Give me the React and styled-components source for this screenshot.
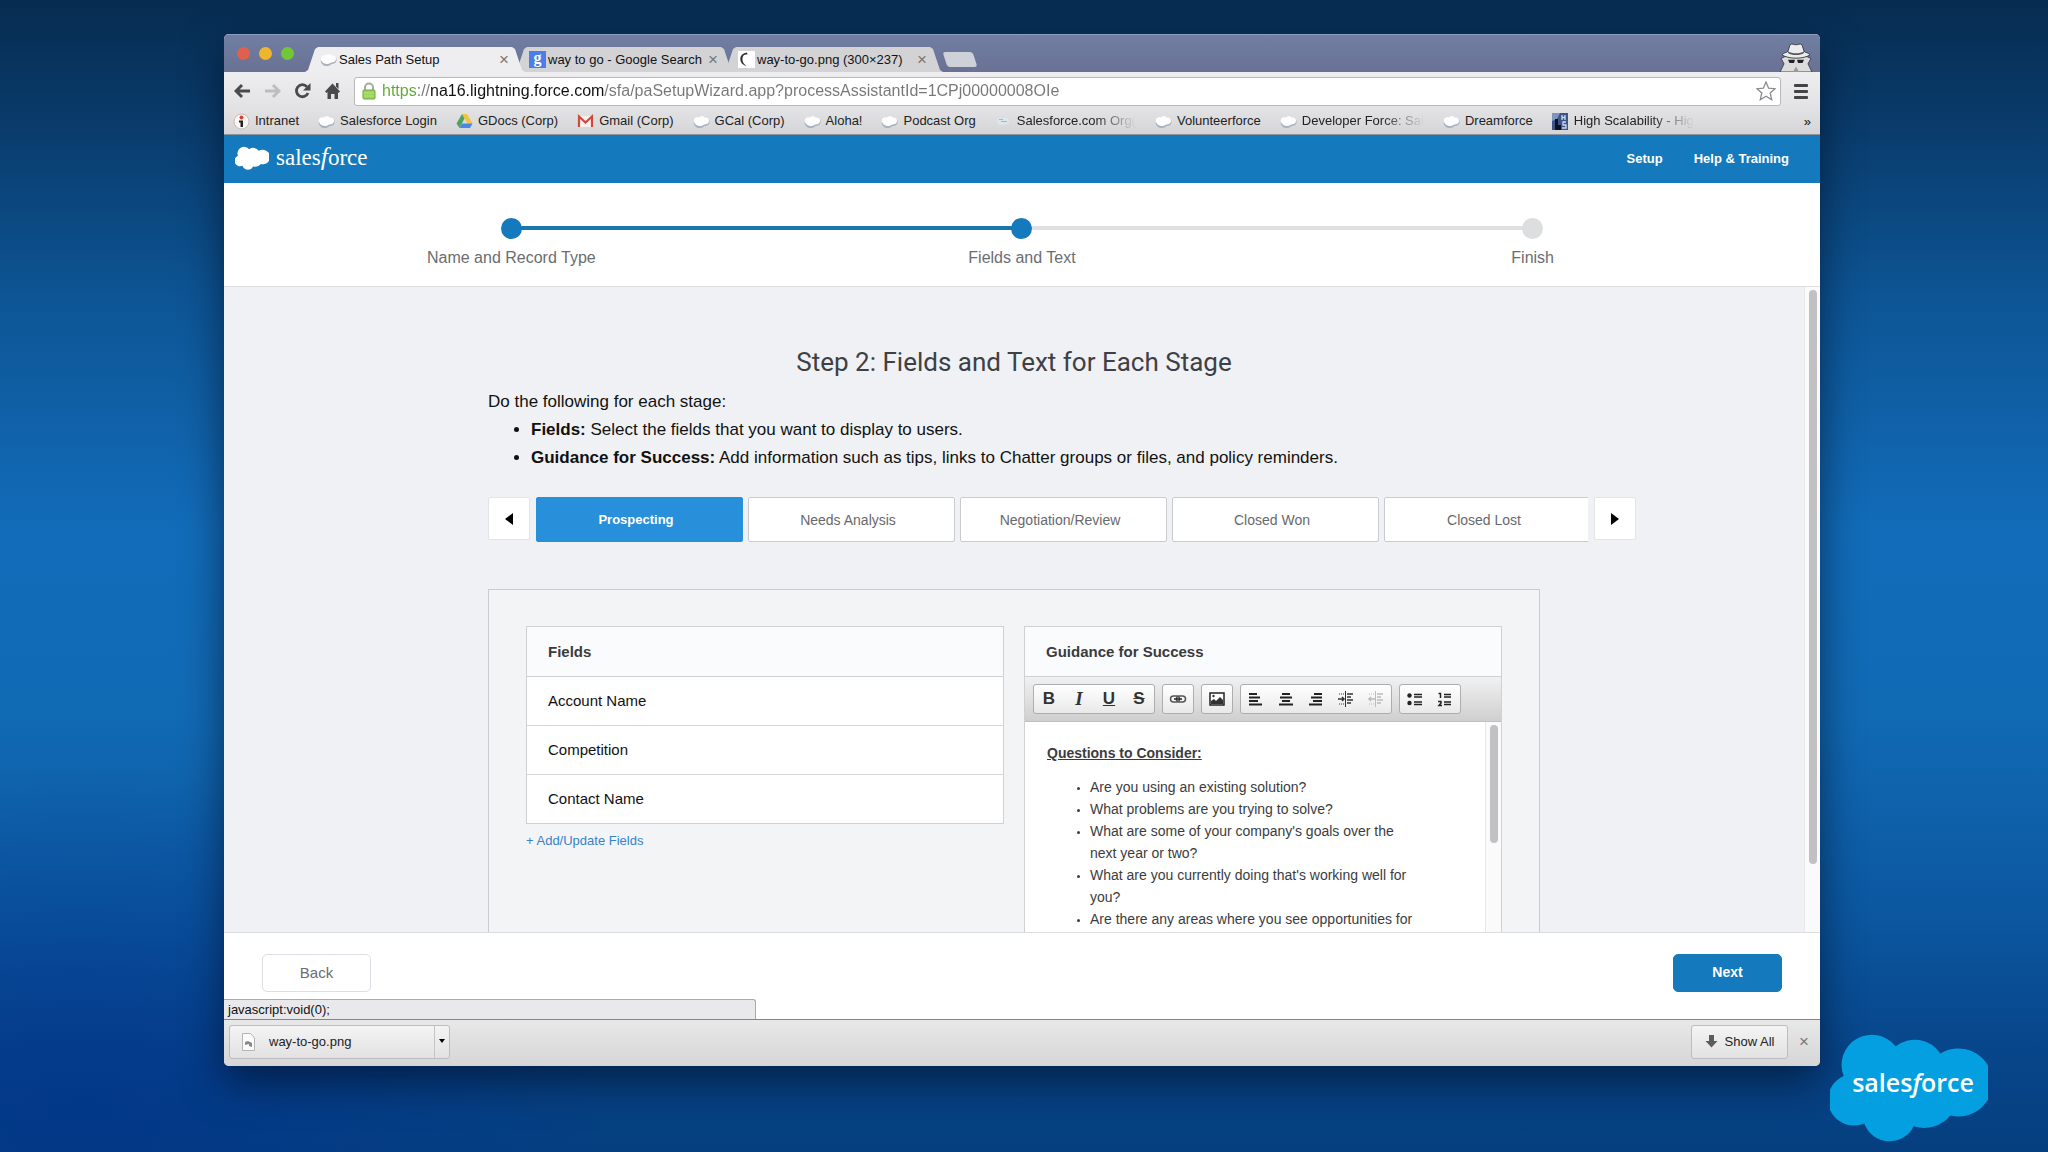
import React from 'react'
import styled, { createGlobalStyle, css } from "styled-components";

const GlobalStyle = createGlobalStyle`
  * {
    box-sizing: border-box;
  }
  body {
    margin: 0;
    font-family: "Liberation Sans", Arial, sans-serif;
    color: #111;
  }
  button, input {
    font-family: inherit;
  }
  a {
    text-decoration: none;
  }
  ul, ol {
    margin: 0;
    padding: 0;
  }
`;

const tabs = [
  { title: 'Sales Path Setup', icon: 'cloud', active: true },
  { title: 'way to go - Google Search', icon: 'google' },
  { title: 'way-to-go.png (300×237)', icon: 'spinner' },
];

const bookmarks = [
  { title: 'Intranet', icon: 'info' },
  { title: 'Salesforce Login', icon: 'cloud' },
  { title: 'GDocs (Corp)', icon: 'drive' },
  { title: 'Gmail (Corp)', icon: 'gmail' },
  { title: 'GCal (Corp)', icon: 'cloud' },
  { title: 'Aloha!', icon: 'cloud' },
  { title: 'Podcast Org', icon: 'cloud' },
  { title: 'Salesforce.com Org(', icon: 'mist', cut: true },
  { title: 'Volunteerforce', icon: 'cloud' },
  { title: 'Developer Force: Sal', icon: 'cloud', cut: true },
  { title: 'Dreamforce', icon: 'cloud' },
  { title: 'High Scalability - Hig', icon: 'hs', cut: true },
];

const steps = [
  { label: 'Name and Record Type', done: true, line: 'blue' },
  { label: 'Fields and Text', done: true, line: 'grey' },
  { label: 'Finish', done: false },
];

const stages = ['Prospecting', 'Needs Analysis', 'Negotiation/Review', 'Closed Won', 'Closed Lost'];

const fields = ['Account Name', 'Competition', 'Contact Name'];

const questions = [
  'Are you using an existing solution?',
  'What problems are you trying to solve?',
  "What are some of your company's goals over the next year or two?",
  "What are you currently doing that's working well for you?",
  'Are there any areas where you see opportunities for',
];

/* icons */

const CLOUD = "M612 468A91 91 0 0 1 768 378A92 92 0 0 1 902 400A103 103 0 1 1 932 588A100 100 0 0 1 822 620A80 80 0 0 1 674 612A76 76 0 0 1 612 468Z";

const CloudShape = ({ width, height, fill }) => (
  <svg width={width} height={height} viewBox="571 332 474 339" preserveAspectRatio="none" aria-hidden="true">
    <path d={CLOUD} fill={fill} />
  </svg>
);

const Favicon = ({ name }) => {
  if (name === 'google') return <GoogleTile aria-hidden="true">g</GoogleTile>;
  return (
    <svg width="17" height="17" viewBox="0 0 17 17" aria-hidden="true">
      {name === 'cloud' && (
        <g>
          <path d="M1 11.500C0 8 3 5 6 5.500C9 3.500 11 4 12 5.500C15 5 17 7 16.500 9C16.500 12 14 13 11.500 13C9 16 3 16 1 11.500Z" fill="#a9b3c0" />
          <path d="M1 9C0 6 2.500 3.500 5.500 4.500C8 2.500 11 3 11.500 4.500C14.500 4 16.500 6 16 8C16 10.500 13.500 11.500 11 11.500C8.500 14 2.500 13.500 1 9Z" fill="#fdfdfe" />
        </g>
      )}
      {name === 'mist' && (
        <g>
          <path d="M2 9C1 6 4 4 7 5C10 3.500 14 5 14 8C14 11 11 12 8 11.500C5 12.500 3 12 2 9Z" fill="#dde6ec" />
          <path d="M6 8.500H12M4 6.500H8" stroke="#9fb9c9" />
        </g>
      )}
      {name === 'spinner' && (
        <g>
          <rect width="17" height="17" fill="#fff" />
          <path d="M9 1.500C3 2 1 7 3 11C4 13 6 14.500 8.500 15C5.500 13 4 10 4.500 7C5 4 7 3 9.500 3.500Z" fill="#333" />
        </g>
      )}
      {name === 'info' && (
        <g>
          <circle cx="8.500" cy="8.500" r="7.500" fill="#fbf6f5" stroke="#c9b8b8" />
          <circle cx="8.500" cy="4.500" r="2" fill="#d8402f" />
          <path d="M6 7.500H10V14H7.500V9.500H6Z" fill="#222" />
        </g>
      )}
      {name === 'drive' && (
        <g>
          <path d="M6 1H11L16.500 10.500H11.500Z" fill="#f3c33a" />
          <path d="M6 1L8.500 5.500L3.500 15L0.500 10.500Z" fill="#4aa564" />
          <path d="M6 10.500H16.500L14 15H3.500Z" fill="#4b86e4" />
        </g>
      )}
      {name === 'gmail' && (
        <g>
          <rect x="1" y="3" width="15" height="11" fill="#f7f1f0" />
          <path d="M2 14V3.500L8.500 9.500L15 3.500V14" fill="none" stroke="#cf4a3e" strokeWidth="2.200" />
        </g>
      )}
      {name === 'hs' && (
        <g>
          <rect width="16" height="17" fill="#3d5488" />
          <path d="M0 0H8L5 6L0 8Z" fill="#7d95bd" />
          <path d="M3 17V6H6V12H9V17Z" fill="#0d1220" />
          <path d="M10 2V7M13 2V7M10 4.500H13M14 9H11V12H14V15H10" fill="none" stroke="#cfdaf0" strokeWidth="1.300" />
        </g>
      )}
    </svg>
  );
};

const BackIcon = ({ color }) => (
  <svg width="17" height="16" viewBox="0 0 17 16" aria-hidden="true">
    <path d="M8 2L2 8L8 14M2.500 8H16" fill="none" stroke={color} strokeWidth="3" />
  </svg>
);

const ForwardIcon = ({ color }) => (
  <svg width="17" height="16" viewBox="0 0 17 16" aria-hidden="true">
    <path d="M9 2L15 8L9 14M14.500 8H1" fill="none" stroke={color} strokeWidth="3" />
  </svg>
);

const ReloadIcon = () => (
  <svg width="17" height="16" viewBox="0 0 17 16" aria-hidden="true">
    <path d="M13 3.800A6 6 0 1 0 14 10" fill="none" stroke="#4a4a4a" strokeWidth="2.800" />
    <path d="M16.500 0V7.500H9Z" fill="#4a4a4a" />
  </svg>
);

const HomeIcon = () => (
  <svg width="17" height="16" viewBox="0 0 17 16" aria-hidden="true">
    <path d="M8.500 0.500L16 8.500L14.500 10L14 9V16H10.500V11H7V16H3.500V9L2.500 10L1 8.500Z" fill="#4a4a4a" />
    <path d="M12 0H14.500V6L12 3.500Z" fill="#4a4a4a" />
  </svg>
);

const LockIcon = () => (
  <svg width="14" height="18" viewBox="0 0 14 18" aria-hidden="true">
    <path d="M3 9V5.500A4 4 0 0 1 11 5.500V9" fill="none" stroke="#a5aaa2" strokeWidth="2" />
    <rect x="1" y="8" width="12" height="9" rx="1" fill="#9bd35c" stroke="#6fa83a" />
    <path d="M2 11H12M2 14H12" stroke="#b5e284" />
  </svg>
);

const StarIcon = () => (
  <svg width="20" height="20" viewBox="0 0 20 20" aria-hidden="true">
    <path d="M10 1L12.600 7.200L19 7.700L14.200 12L15.700 18.700L10 15.200L4.300 18.700L5.800 12L1 7.700L7.400 7.200Z" fill="#fff" stroke="#8a8a8a" strokeWidth="1.300" />
  </svg>
);

const SpyIcon = () => (
  <svg width="34" height="29" viewBox="0 0 34 32" preserveAspectRatio="none" aria-hidden="true">
    <path d="M2 17L8 14L26 14L32 17L29 23L33 32H1L5 23Z" fill="#dcdcdc" stroke="#3c4152" />
    <path d="M3 13C9 18 25 18 31 13C29 10 26 11 25 9L23 2C21 0 19 2 17 2C15 2 13 0 11 2L9 9C8 11 5 10 3 13Z" fill="#ececec" stroke="#3c4152" />
    <path d="M9 9C13 12 21 12 25 9L25 11C21 14 13 14 9 11Z" fill="#555" />
    <path d="M9 18.500H16L15 22H10.500ZM18 18.500H25L23.500 22H19Z" fill="#222" />
    <path d="M14 32L17 26L20 32Z" fill="#999" />
  </svg>
);

const ToolIcon = ({ name }) => (
  <svg width="18" height="16" viewBox="0 0 18 16" aria-hidden="true" fill="none" stroke="#222">
    {name === 'link' && (
      <g strokeWidth="1.500" stroke="#555">
        <rect x="1.500" y="5" width="9" height="6" rx="3" />
        <rect x="7.500" y="5" width="9" height="6" rx="3" />
        <path d="M5 8H13" stroke="#222" />
      </g>
    )}
    {name === 'image' && (
      <g>
        <rect x="2" y="2" width="14" height="12" fill="#fff" strokeWidth="1.500" />
        <path d="M3 13V10L6 8L8 10L12 6L15 9V13Z" fill="#333" stroke="none" />
        <circle cx="5.500" cy="5" r="1.200" fill="#333" stroke="none" />
      </g>
    )}
    {name === 'left' && <path d="M2 3H10M2 6.500H13M2 10H11M2 13.500H15" strokeWidth="2.200" />}
    {name === 'center' && <path d="M5 3H13M3 6.500H15M5 10H13M2 13.500H16" strokeWidth="2.200" />}
    {name === 'right' && <path d="M7 3H15M4 6.500H15M6 10H15M2 13.500H15" strokeWidth="2.200" />}
    {(name === 'indent' || name === 'outdent') && (
      <g stroke={name === 'indent' ? '#333' : '#bbb'}>
        <path d="M8.500 0V16" />
        <path d="M10 3H16M10 6H14M10 9H16M10 12H14" strokeWidth="1.500" />
        <path d="M2 3H8M2 13H8" strokeDasharray="1 1" />
        <path d={name === 'indent' ? "M1 8H7M5 6L7 8L5 10" : "M8 8H2M4 6L2 8L4 10"} strokeWidth="1.500" />
      </g>
    )}
    {name === 'bullets' && (
      <g>
        <circle cx="3.500" cy="4.500" r="2.200" fill="#222" stroke="none" />
        <circle cx="3.500" cy="12" r="2.200" fill="#222" stroke="none" />
        <path d="M8 3.500H16M8 6H16M8 11H16M8 13.500H16" strokeWidth="1.500" />
      </g>
    )}
    {name === 'numbers' && (
      <g>
        <path d="M2.500 2.500H4.500V7M2 10.500H5V12L3 14.500H6" strokeWidth="1.500" />
        <path d="M8 3.500H15M8 6H15M8 11H15M8 13.500H15" strokeWidth="1.500" />
      </g>
    )}
  </svg>
);

const groups = [
  ['bold', 'italic', 'underline', 'strike'],
  ['link'],
  ['image'],
  ['left', 'center', 'right', 'indent', 'outdent'],
  ['bullets', 'numbers'],
];

const letters = { bold: 'B', italic: 'I', underline: 'U', strike: 'S' };

const Chrome = () => (
  <header>
    <TabStrip>
      <Lights>
        <Light $color="#e0604f" />
        <Light $color="#edb62f" />
        <Light $color="#74c53a" />
      </Lights>
      <Tabs>
        {tabs.map((t) => (
          <Tab key={t.title} $active={t.active}>
            <Favicon name={t.icon} />
            <TabTitle>{t.title}</TabTitle>
            <CloseButton aria-label="Close tab">×</CloseButton>
          </Tab>
        ))}
        <NewTab aria-label="New tab" />
      </Tabs>
      <SpyIcon />
    </TabStrip>
    <Toolbar>
      <IconButton aria-label="Back"><BackIcon color="#4a4a4a" /></IconButton>
      <IconButton aria-label="Forward"><ForwardIcon color="#bdbdbd" /></IconButton>
      <IconButton aria-label="Reload"><ReloadIcon /></IconButton>
      <IconButton aria-label="Home"><HomeIcon /></IconButton>
      <AddressBox>
        <LockIcon />
        <AddressInput
          aria-label="Address"
          defaultValue="https://na16.lightning.force.com/sfa/paSetupWizard.app?processAssistantId=1CPj00000008OIe"
        />
        <StarIcon />
      </AddressBox>
      <MenuButton aria-label="Menu"><i /><i /><i /></MenuButton>
    </Toolbar>
    <Bookmarks>
      {bookmarks.map((b) => (
        <Bookmark key={b.title} href="#" $cut={b.cut}>
          <Favicon name={b.icon} />
          <span>{b.title}</span>
        </Bookmark>
      ))}
      <More>»</More>
    </Bookmarks>
  </header>
);

const Editor = () => (
  <Card>
    <CardTitle>Guidance for Success</CardTitle>
    <EditorBar>
      {groups.map((g) => (
        <Group key={g[0]}>
          {g.map((name) => (
            <Tool key={name} aria-label={name} $kind={name}>
              {letters[name] || <ToolIcon name={name} />}
            </Tool>
          ))}
        </Group>
      ))}
    </EditorBar>
    <EditorBody>
      <EditorText>
        <h4>Questions to Consider:</h4>
        <ul>
          {questions.map((q) => <li key={q}>{q}</li>)}
        </ul>
      </EditorText>
      <Track>
        <Thumb $height="118px" />
      </Track>
    </EditorBody>
  </Card>
);

const App = () => (
  <Desktop>
    <GlobalStyle />
    <Window>
      <Chrome />
      <AppBar>
        <Brand href="#">
          <CloudShape width={34} height={24} fill="#fff" />
          <span>sales<em>f</em>orce</span>
        </Brand>
        <AppLink href="#">Setup</AppLink>
        <AppLink href="#">Help &amp; Training</AppLink>
      </AppBar>
      <Steps>
        {steps.map((s) => (
          <Step key={s.label} $done={s.done} $line={s.line}>{s.label}</Step>
        ))}
      </Steps>
      <Main>
        <Scroller>
          <Content>
            <Title>Step 2: Fields and Text for Each Stage</Title>
            <Intro>
              <p>Do the following for each stage:</p>
              <ul>
                <li><b>Fields:</b> Select the fields that you want to display to users.</li>
                <li><b>Guidance for Success:</b> Add information such as tips, links to Chatter groups or files, and policy reminders.</li>
              </ul>
            </Intro>
            <StageRow>
              <Arrow aria-label="Previous stages">
                <svg width="8" height="12" viewBox="0 0 8 12"><path d="M8 0V12L0 6Z" /></svg>
              </Arrow>
              <StageList>
                {stages.map((s, i) => <Stage key={s} $active={i === 0}>{s}</Stage>)}
              </StageList>
              <Arrow aria-label="Next stages">
                <svg width="8" height="12" viewBox="0 0 8 12"><path d="M0 0V12L8 6Z" /></svg>
              </Arrow>
            </StageRow>
            <Panel>
              <div>
                <Card>
                  <CardTitle>Fields</CardTitle>
                  {fields.map((f) => <FieldRow key={f}>{f}</FieldRow>)}
                </Card>
                <AddLink href="#">+ Add/Update Fields</AddLink>
              </div>
              <Editor />
            </Panel>
          </Content>
        </Scroller>
        <Track>
          <Thumb $height="574px" />
        </Track>
      </Main>
      <Footer>
        <FooterButton>Back</FooterButton>
        <FooterButton $primary>Next</FooterButton>
        <StatusBubble>javascript:void(0);</StatusBubble>
      </Footer>
      <Shelf>
        <Download>
          <DownloadButton>
            <svg width="13" height="18" viewBox="0 0 13 18" aria-hidden="true">
              <path d="M0.500 0.500H8.500L12.500 5V17.500H0.500Z" fill="#fafafa" stroke="#b5b5b5" />
              <path d="M3 9L6 8L10 10V14L7 13V11L3 12Z" fill="#888" />
            </svg>
            way-to-go.png
          </DownloadButton>
          <DownloadMenu aria-label="Download options">
            <svg width="6" height="4" viewBox="0 0 6 4"><path d="M0 0H6L3 4Z" /></svg>
          </DownloadMenu>
        </Download>
        <ShowAll>
          <svg width="13" height="13" viewBox="0 0 13 13" aria-hidden="true">
            <path d="M4 0H9V6H12.500L6.500 12.500L0.500 6H4Z" fill="#5c5c5c" />
          </svg>
          Show All
        </ShowAll>
        <CloseButton aria-label="Close downloads">×</CloseButton>
      </Shelf>
    </Window>
    <Watermark>
      <CloudShape width={158} height={112} fill="#049fe0" />
      <span>sales<em>f</em>orce</span>
    </Watermark>
  </Desktop>
);

export default App;

const Desktop = styled.div`
  position: relative;
  height: 100vh;
  display: flex;
  padding: 34px 228px 86px 224px;
  overflow: hidden;
  background:
    radial-gradient(ellipse 520px 340px at 4% 96%, rgba(0, 50, 140, .6), rgba(0, 50, 140, 0)),
    linear-gradient(180deg, #072c50 0%, #093a69 10%, #0d5595 26%, #126cb9 46%, #116ab4 62%, #0b569f 80%, #074488 92%, #053f80 100%);
`;

const Window = styled.div`
  flex: 1;
  min-width: 0;
  display: flex;
  flex-direction: column;
  overflow: hidden;
  border-radius: 5px;
  background: #fff;
  box-shadow: 0 16px 40px rgba(0, 10, 30, .6);
`;

const TabStrip = styled.div`
  height: 38px;
  display: flex;
  align-items: flex-end;
  padding: 0 7px 0 13px;
  background: linear-gradient(#6f7fa3, #6a7194);
  border-top: 1px solid #8b9bbb;
`;

const Lights = styled.div`
  display: flex;
  gap: 9px;
  align-self: center;
  width: 68px;
`;

const Light = styled.i`
  width: 13px;
  height: 13px;
  border-radius: 50%;
  background: ${({ $color }) => $color};
`;

const Tabs = styled.div`
  flex: 1;
  display: flex;
  align-items: flex-end;
`;

const Tab = styled.div`
  position: relative;
  z-index: ${({ $active }) => $active ? 2 : 1};
  width: 220px;
  height: 25px;
  margin-right: -11px;
  padding: 0 15px;
  display: flex;
  align-items: center;
  gap: 2px;
  background: ${({ $active }) => $active ? '#eeedef' : '#d3d3d6'};
  clip-path: polygon(0 100%, 3px 92%, 10px 8%, 13px 0, 207px 0, 210px 8%, 217px 92%, 100% 100%);
`;

const TabTitle = styled.span`
  flex: 1;
  font-size: 13px;
  white-space: nowrap;
`;

const CloseButton = styled.button`
  border: none;
  background: none;
  padding: 0;
  width: 12px;
  font-size: 17px;
  line-height: 17px;
  color: #777;
`;

const NewTab = styled.button`
  width: 30px;
  height: 15px;
  margin: 0 0 5px 13px;
  border: none;
  border-radius: 3px;
  background: #cfd1d8;
  transform: skewX(18deg);
`;

const GoogleTile = styled.span`
  width: 17px;
  height: 17px;
  background: #4c7de8;
  color: #fff;
  font: bold 16px/13px "Liberation Serif", serif;
  text-align: center;
`;

const Toolbar = styled.div`
  height: 38px;
  display: flex;
  align-items: center;
  gap: 13px;
  padding: 0 12px 0 10px;
  background: linear-gradient(#eeedef, #e2e1e3);
`;

const IconButton = styled.button`
  width: 17px;
  height: 18px;
  padding: 0;
  border: none;
  background: none;
  display: flex;
  align-items: center;
`;

const AddressBox = styled.label`
  flex: 1;
  height: 29px;
  display: flex;
  align-items: center;
  padding: 0 4px 0 7px;
  background: #fff;
  border: 1px solid #b9b8ba;
  border-radius: 3px;
`;

const AddressInput = styled.input`
  flex: 1;
  height: 24px;
  margin-left: 6px;
  border: none;
  padding: 0;
  outline: none;
  font-size: 16px;
  /* green scheme, black host, grey path */
  background: linear-gradient(90deg, #5fa82e 35px, #777 35px, #777 48px, #111 48px, #111 222px, #777 222px);
  background-clip: text;
  -webkit-background-clip: text;
  -webkit-text-fill-color: transparent;
`;

const MenuButton = styled.button`
  width: 14px;
  padding: 0;
  border: none;
  background: none;
  display: grid;
  gap: 3px;

  i {
    height: 3px;
    border-radius: 1px;
    background: #444;
  }
`;

const Bookmarks = styled.nav`
  height: 25px;
  display: flex;
  align-items: center;
  gap: 19px;
  padding: 0 9px 2px;
  background: linear-gradient(#e2e1e3, #d6d4d6);
  border-bottom: 1px solid #8e9399;
`;

const Bookmark = styled.a`
  display: flex;
  align-items: center;
  gap: 5px;
  font-size: 13px;
  line-height: 18px;
  color: #222;
  white-space: nowrap;
  ${({ $cut }) => $cut && css`
    mask-image: linear-gradient(90deg, #000 70%, transparent);
  `}
`;

const More = styled.span`
  margin-left: auto;
  font-size: 13px;
`;

const AppBar = styled.div`
  height: 48px;
  display: flex;
  align-items: center;
  gap: 31px;
  padding: 0 31px 2px 11px;
  background: #147abd;
`;

const Brand = styled.a`
  margin-right: auto;
  display: flex;
  align-items: center;
  gap: 7px;
  color: #fff;
  font: 23px/30px "Liberation Serif", serif;

  em {
    font-size: 26px;
    line-height: 20px;
  }
`;

const AppLink = styled.a`
  color: #fff;
  font-size: 13px;
  font-weight: bold;
`;

const Steps = styled.ol`
  height: 104px;
  display: grid;
  grid-template-columns: repeat(3, 1fr);
  padding: 35px 32px 0;
  border-bottom: 1px solid #dcdee1;
  list-style: none;
`;

const Step = styled.li`
  position: relative;
  display: flex;
  flex-direction: column;
  align-items: center;
  gap: 10px;
  font-size: 16px;
  line-height: 18px;
  color: #6b6d70;

  &::before {
    content: "";
    z-index: 1;
    width: 21px;
    height: 21px;
    border-radius: 50%;
    background: ${({ $done }) => $done ? '#147abd' : '#dcdee0'};
  }

  ${({ $line }) => $line && css`
    &::after {
      content: "";
      position: absolute;
      top: 8px;
      left: 50%;
      width: 100%;
      height: 4px;
      background: ${$line === 'blue' ? '#1a76ae' : '#dfe0e1'};
    }
  `}
`;

const Main = styled.main`
  flex: 1;
  min-height: 0;
  display: flex;
  background: #f0f1f4;
`;

const Scroller = styled.div`
  flex: 1;
  min-width: 0;
  overflow: hidden;
`;

const Content = styled.div`
  max-width: 1052px;
  margin: 0 auto;
  padding-top: 59px;
`;

const Title = styled.h1`
  margin: 0 0 10px;
  font: 400 26px/32px "Roboto", sans-serif;
  color: #3e4045;
  text-align: center;
`;

const Intro = styled.div`
  font-size: 17px;
  line-height: 28px;

  p {
    margin: 0;
  }
  ul {
    padding-left: 43px;
  }
`;

const StageRow = styled.div`
  display: flex;
  gap: 6px;
  margin: 25px -96px 47px 0;
`;

const Arrow = styled.button`
  width: 42px;
  height: 43px;
  border: 1px solid #e3e4e6;
  border-radius: 2px;
  background: #fff;
  padding: 4px 0 0;
`;

const StageList = styled.div`
  flex: 1;
  min-width: 0;
  display: flex;
  gap: 5px;
  overflow: hidden;
`;

const Stage = styled.button`
  flex: 0 0 207px;
  height: 45px;
  padding: 0 7px 0 0;
  border: 1px solid #c9cbce;
  border-radius: 2px;
  background: #fff;
  color: #68696c;
  font-size: 14px;
  ${({ $active }) => $active && css`
    border-color: #288fdb;
    background: #288fdb;
    color: #fff;
    font-size: 13px;
    font-weight: bold;
  `}
`;

const Panel = styled.section`
  display: grid;
  grid-template-columns: 1fr 1fr;
  align-items: start;
  gap: 20px;
  padding: 36px 37px;
  border: 1px solid #c9cbce;
  background: #f3f4f6;
`;

const Card = styled.div`
  border: 1px solid #cfd1d3;
  background: #fff;
`;

const CardTitle = styled.h2`
  margin: 0;
  padding: 0 21px;
  font-size: 15px;
  line-height: 49px;
  color: #3a3b3d;
  background: #fafbfd;
  border-bottom: 1px solid #cfd1d3;
`;

const FieldRow = styled.div`
  padding: 0 21px;
  font-size: 15px;
  line-height: 48px;

  & + & {
    border-top: 1px solid #d5d7d9;
  }
`;

const AddLink = styled.a`
  display: inline-block;
  margin-top: 8px;
  font-size: 13px;
  line-height: 18px;
  color: #3583cc;
`;

const EditorBar = styled.div`
  display: flex;
  gap: 7px;
  padding: 7px 8px;
  background: linear-gradient(#f1f1f2, #cfcfd0);
  border-bottom: 1px solid #bfbfc0;
`;

const Group = styled.div`
  display: flex;
  border: 1px solid #aeaeb0;
  border-radius: 3px;
  background: linear-gradient(#fff, #e9e9ea);
`;

const Tool = styled.button`
  width: 30px;
  height: 28px;
  padding: 0;
  border: none;
  background: none;
  display: flex;
  align-items: center;
  justify-content: center;
  font-size: 17px;
  font-weight: bold;
  color: #333;
  ${({ $kind }) => $kind === 'italic' && css`
    font-family: "Liberation Serif", serif;
    font-style: italic;
    font-size: 19px;
  `}
  ${({ $kind }) => $kind === 'underline' && css`text-decoration: underline;`}
  ${({ $kind }) => $kind === 'strike' && css`text-decoration: line-through;`}
`;

const EditorBody = styled.div`
  display: flex;
  height: 260px;
`;

const EditorText = styled.div`
  flex: 1;
  padding: 20px 68px 0 22px;
  font-size: 14px;
  line-height: 22px;
  color: #3c3c3e;

  h4 {
    margin: 0 0 12px;
    font-size: 14px;
    text-decoration: underline;
  }
  ul {
    padding-left: 43px;
  }
  li::marker {
    font-size: 10px;
  }
`;

const Track = styled.div`
  width: 16px;
  padding: 3px 4px;
  background: #fafafb;
  border-left: 1px solid #e6e7e9;
`;

const Thumb = styled.div`
  width: 8px;
  height: ${({ $height }) => $height};
  max-height: 100%;
  border-radius: 4px;
  background: #c1c1c3;
`;

const Footer = styled.footer`
  position: relative;
  height: 87px;
  display: flex;
  justify-content: space-between;
  padding: 21px 38px 0;
  border-top: 1px solid #dcdde0;
  background: #fff;
`;

const FooterButton = styled.button`
  width: 109px;
  height: 38px;
  padding: 0 0 2px;
  border-radius: 5px;
  border: 1px solid #dcdee4;
  background: #fff;
  color: #6b6d70;
  font-size: 15px;
  ${({ $primary }) => $primary && css`
    border-color: #147abd;
    background: #147abd;
    color: #fff;
    font-size: 14px;
    font-weight: bold;
  `}
`;

const StatusBubble = styled.div`
  position: absolute;
  left: 0;
  bottom: 0;
  width: calc(100% / 3);
  min-width: 300px;
  height: 20px;
  padding-left: 4px;
  border: 1px solid #a9a9ab;
  border-width: 1px 1px 0 0;
  border-radius: 0 3px 0 0;
  background: #e9e9eb;
  font-size: 13px;
  line-height: 19px;
`;

const Shelf = styled.div`
  height: 47px;
  display: flex;
  align-items: center;
  gap: 10px;
  padding: 0 10px 3px 5px;
  border-top: 1px solid #858587;
  background: linear-gradient(#e8e8e9, #d6d6d7);
`;

const Download = styled.div`
  display: flex;
  width: 221px;
  height: 34px;
  margin-right: auto;
  border: 1px solid #bdbdbf;
  border-radius: 3px;
  background: linear-gradient(#f4f4f5, #e2e2e3);
`;

const DownloadButton = styled.button`
  flex: 1;
  display: flex;
  align-items: center;
  gap: 14px;
  padding: 0 12px;
  border: none;
  background: none;
  font-size: 13px;
  color: #222;
`;

const DownloadMenu = styled.button`
  width: 15px;
  padding: 0 0 6px;
  border: none;
  border-left: 1px solid #c5c5c7;
  background: none;
`;

const ShowAll = styled.button`
  display: flex;
  align-items: center;
  justify-content: center;
  gap: 7px;
  width: 97px;
  height: 34px;
  border: 1px solid #bdbdbf;
  border-radius: 3px;
  background: linear-gradient(#f4f4f5, #e2e2e3);
  font-size: 13px;
  color: #222;
`;

/* logo that floats over the wallpaper */
const Watermark = styled.div`
  position: absolute;
  right: 60px;
  bottom: 9px;
  display: grid;
  place-items: center;
  color: #fff;
  font: 600 25px/30px "Open Sans", sans-serif;

  svg, span {
    grid-area: 1 / 1;
  }
  span {
    padding: 0 0 10px 8px;
  }
`;
